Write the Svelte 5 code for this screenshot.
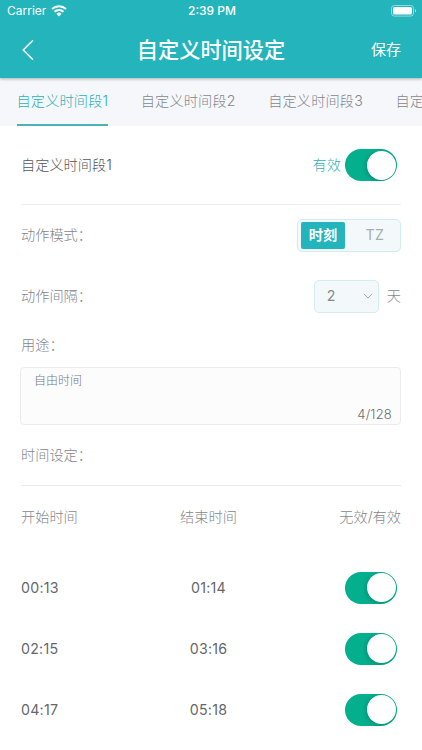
<script lang="ts">
	const tabs = ['自定义时间段1', '自定义时间段2', '自定义时间段3', '自定义时间段4'];
	let activeTab = 0;

	let enabled = true;
	let mode: 'time' | 'tz' = 'time';
	let purpose = '自由时间';

	let slots = [
		{ start: '00:13', end: '01:14', enabled: true },
		{ start: '02:15', end: '03:16', enabled: true },
		{ start: '04:17', end: '05:18', enabled: true }
	];
</script>

<div class="screen">
	<header>
		<div class="status-bar">
			<div class="carrier">
				<span>Carrier</span>
				<svg width="16" height="12" viewBox="0 0 16 12">
					<path d="M1 4.1a10.2 10.2 0 0 1 14 0" fill="none" stroke="#fff" stroke-width="2" />
					<path d="M3.5 6.8a6.6 6.6 0 0 1 9 0" fill="none" stroke="#fff" stroke-width="1.9" />
					<path d="M8 11.4 5.4 8.8a3.8 3.8 0 0 1 5.2 0z" fill="#fff" />
				</svg>
			</div>
			<span class="clock">2:39 PM</span>
			<svg class="battery" width="26" height="12" viewBox="0 0 26 12">
				<rect x="0.5" y="0.5" width="22" height="10.6" rx="2.8" fill="none" stroke="#fff" stroke-opacity="0.5" />
				<rect x="2" y="2" width="19" height="7.6" rx="1.5" fill="#fff" />
				<path d="M24 4v3.6a2 2 0 0 0 0-3.6z" fill="#fff" fill-opacity="0.6" />
			</svg>
		</div>
		<div class="nav-bar">
			<button class="back" aria-label="返回">
				<svg width="12" height="22" viewBox="0 0 12 22">
					<path d="M11 1.2 1.2 11 11 20.8" fill="none" stroke="#fff" stroke-width="1.5" />
				</svg>
			</button>
			<h1>自定义时间设定</h1>
			<button class="save">保存</button>
		</div>
	</header>

	<nav class="tabs">
		{#each tabs as tab, i}
			<button class="tab" class:active={i === activeTab} on:click={() => (activeTab = i)}>{tab}</button>
		{/each}
	</nav>

	<main>
		<div class="row name-row">
			<span>{tabs[activeTab]}</span>
			<div class="state">
				<span>有效</span>
				<button class="switch" class:on={enabled} on:click={() => (enabled = !enabled)} aria-label="有效">
					<i></i>
				</button>
			</div>
		</div>

		<div class="row mode-row">
			<span>动作模式：</span>
			<div class="segmented">
				<button class:selected={mode === 'time'} on:click={() => (mode = 'time')}>时刻</button>
				<button class:selected={mode === 'tz'} on:click={() => (mode = 'tz')}>TZ</button>
			</div>
		</div>

		<div class="row interval-row">
			<span>动作间隔：</span>
			<div class="interval">
				<button class="select">
					<span>2</span>
					<svg width="10" height="6" viewBox="0 0 10 6">
						<path d="M0.8 0.8 5 4.9 9.2 0.8" fill="none" stroke="#a3a9ab" stroke-width="1" />
					</svg>
				</button>
				<span>天</span>
			</div>
		</div>

		<div class="row label-row">用途：</div>
		<div class="purpose">
			<p>{purpose}</p>
			<span class="count">{purpose.length}/128</span>
		</div>
		<div class="row setting-row">时间设定：</div>

		<div class="slot slot-head">
			<span>开始时间</span>
			<span class="end">结束时间</span>
			<span class="last">无效/有效</span>
		</div>
		<div class="slots">
			{#each slots as slot}
				<div class="slot">
					<span>{slot.start}</span>
					<span class="end">{slot.end}</span>
					<div class="last toggle">
						<button
							class="switch"
							class:on={slot.enabled}
							on:click={() => (slot.enabled = !slot.enabled)}
							aria-label="有效"
						>
							<i></i>
						</button>
					</div>
				</div>
			{/each}
		</div>
	</main>
</div>

<style>
	:global(body) {
		background: #fff;
	}

	.screen {
		width: 100%;
		height: 100vh;
		overflow: hidden;
		display: flex;
		flex-direction: column;
		background: #fff;
		color: #85878b;
		font-family: Inter, 'Noto Sans CJK SC', sans-serif;
		font-size: 14.2px;
		font-weight: 300;
		line-height: 20px;
	}

	button {
		margin: 0;
		padding: 0;
		border: none;
		background: none;
		font: inherit;
		color: inherit;
	}

	svg {
		display: block;
	}

	header {
		height: 78px;
		flex: none;
		position: relative;
		background: #23b4bc;
		color: #fff;
		box-shadow: 0 1px 3px rgba(0, 0, 0, 0.3);
	}

	.status-bar {
		height: 22px;
		padding: 0 5px 0 7px;
		display: grid;
		grid-template-columns: 1fr auto 1fr;
		align-items: center;
		font-size: 12px;
		font-weight: 400;
	}

	.carrier {
		display: flex;
		align-items: center;
		gap: 5px;
	}

	.clock {
		font-weight: 500;
	}

	.battery {
		justify-self: end;
	}

	.nav-bar {
		height: 56px;
		padding: 0 21px 0 22px;
		display: grid;
		grid-template-columns: 1fr auto 1fr;
		align-items: center;
	}

	.back {
		justify-self: start;
	}

	h1 {
		margin: 0 1px 0 0;
		font-size: 21.2px;
		font-weight: 500;
		line-height: 30px;
	}

	.save {
		justify-self: end;
		font-size: 15px;
		font-weight: 400;
	}

	.tabs {
		height: 48px;
		flex: none;
		padding-left: 16.5px;
		display: flex;
		gap: 32.5px;
		overflow: hidden;
		background: #f5f7fb;
	}

	.tab {
		flex: none;
		border-bottom: 2px solid transparent;
		letter-spacing: 0.15px;
	}

	.tab.active {
		color: #2fb0b6;
		border-bottom-color: #4bb3b8;
	}

	main {
		padding: 0 21px;
	}

	.row {
		display: flex;
		align-items: center;
		justify-content: space-between;
	}

	.name-row {
		height: 78px;
		border-bottom: 1px solid #eceef0;
		color: #55575b;
	}

	.state {
		display: flex;
		align-items: center;
		gap: 4px;
		padding-right: 4px;
		color: #2fb0b6;
	}

	.switch {
		width: 52px;
		height: 32px;
		padding: 1px;
		display: flex;
		overflow: hidden;
		border-radius: 16px;
		background: #d9dcde;
	}

	.switch.on {
		justify-content: flex-end;
		background: #03af8d;
	}

	.switch i {
		width: 29px;
		height: 29px;
		margin-top: 0.5px;
		border-radius: 50%;
		background: #fff;
		box-shadow: -1px 1px 4px rgba(0, 0, 0, 0.2);
	}

	.mode-row {
		height: 60px;
	}

	.segmented {
		width: 104px;
		height: 33px;
		box-sizing: border-box;
		padding: 2px;
		display: flex;
		border: 1px solid #d3ecee;
		border-radius: 5px;
		background: #f3f9fa;
		color: #a9adaf;
	}

	.segmented button {
		flex: 1 1 0;
		padding-left: 7px;
		border-radius: 2px;
		font-weight: 400;
		letter-spacing: 0.5px;
	}

	.segmented button.selected {
		flex: none;
		width: 44px;
		margin-left: 1px;
		padding: 0;
		background: #23b4bc;
		color: #fff;
		font-weight: 700;
		letter-spacing: 0;
	}

	.interval-row {
		height: 62px;
	}

	.interval {
		display: flex;
		align-items: center;
		gap: 8px;
	}

	.select {
		width: 65px;
		height: 33px;
		box-sizing: border-box;
		padding: 0 5px 0 12px;
		display: flex;
		align-items: center;
		justify-content: space-between;
		border: 1px solid #d3ecee;
		border-radius: 5px;
		background: #f3f9fa;
		font-weight: 400;
	}

	.label-row {
		height: 36px;
	}

	.purpose {
		height: 58px;
		box-sizing: border-box;
		margin: 4px 0 0 -1px;
		padding: 3px 8px 0 13px;
		display: flex;
		flex-direction: column;
		justify-content: space-between;
		border: 1px solid #e9ebee;
		border-radius: 4px;
		background: #fcfcfd;
		font-size: 12px;
	}

	.purpose p {
		margin: 0;
		color: #77797c;
	}

	.count {
		align-self: flex-end;
		font-size: 13px;
		letter-spacing: 0.2px;
		color: #6c6e71;
	}

	.setting-row {
		height: 60px;
		border-bottom: 1px solid #e9ebee;
	}

	.slot {
		height: 61px;
		display: grid;
		grid-template-columns: 159px 57px 1fr;
		align-items: center;
		font-weight: 400;
		letter-spacing: 0.25px;
		color: #65676b;
	}

	.slot-head {
		font-weight: 300;
		letter-spacing: 0;
		color: #85878b;
	}

	.end {
		text-align: center;
	}

	.last {
		justify-self: end;
	}

	.toggle {
		padding-right: 4px;
	}

	.slots {
		padding-top: 10px;
	}
</style>
